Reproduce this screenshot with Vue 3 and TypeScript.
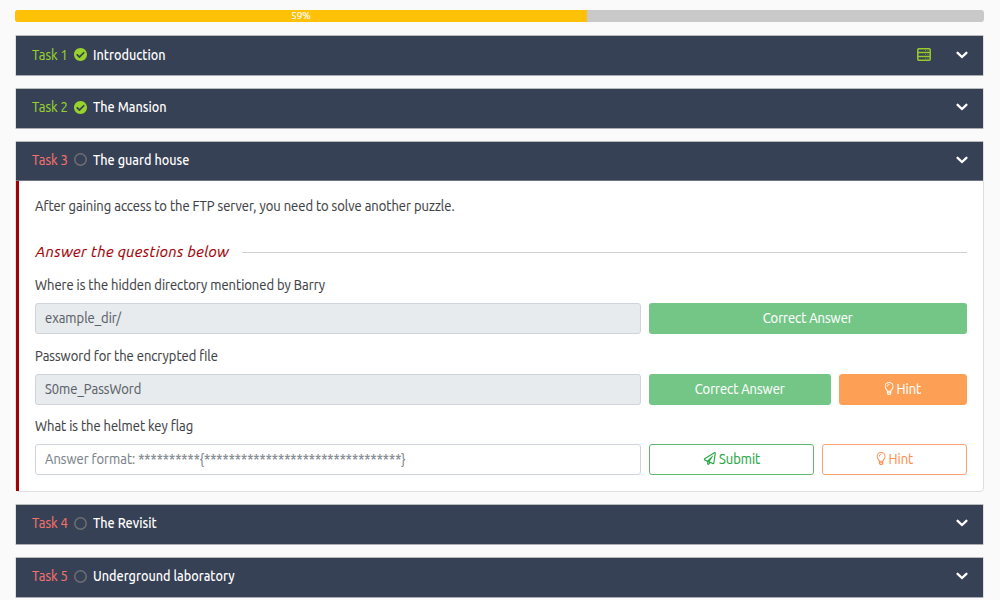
<script setup lang="ts">
interface Question {
  id: string
  prompt: string
  value: string
  placeholder?: string
  solved: boolean
  hint: boolean
}
interface Task {
  id: number
  title: string
  done: boolean
  server?: boolean
  open?: boolean
}

const progress = 59
const tasks: Task[] = [
  { id: 1, title: 'Introduction', done: true, server: true },
  { id: 2, title: 'The Mansion', done: true },
  { id: 3, title: 'The guard house', done: false, open: true },
  { id: 4, title: 'The Revisit', done: false },
  { id: 5, title: 'Underground laboratory', done: false },
]
const questions: Question[] = [
  { id: 'dir', prompt: 'Where is the hidden directory mentioned by Barry', value: 'example_dir/', solved: true, hint: false },
  { id: 'pass', prompt: 'Password for the encrypted file', value: 'S0me_PassWord', solved: true, hint: true },
  {
    id: 'flag',
    prompt: 'What is the helmet key flag',
    value: '',
    placeholder: 'Answer format: ' + '*'.repeat(10) + '{' + '*'.repeat(32) + '}',
    solved: false,
    hint: true,
  },
]
</script>

<template>
  <main class="page">
    <div class="progress">
      <div class="bar" :style="{ width: progress + '%' }"><span>{{ progress }}%</span></div>
    </div>

    <section v-for="t in tasks" :key="t.id" class="card" :class="{ open: t.open }">
      <header class="head">
        <span class="num" :class="{ done: t.done }"><span class="t">Task {{ t.id }}</span></span>
        <svg v-if="t.done" class="state" viewBox="8 8 496 496">
          <path fill="#98d32b" d="M504 256c0 136.967-111.033 248-248 248S8 392.967 8 256 119.033 8 256 8s248 111.033 248 248zM227.314 387.314l184-184c6.248-6.248 6.248-16.379 0-22.627l-22.627-22.627c-6.248-6.249-16.379-6.249-22.628 0L216 308.118l-70.059-70.059c-6.248-6.248-16.379-6.248-22.628 0l-22.627 22.627c-6.248 6.248-6.248 16.379 0 22.627l104 104c6.249 6.249 16.379 6.249 22.628.001z" />
        </svg>
        <svg v-else class="state" viewBox="0 0 13 13">
          <circle cx="6.5" cy="6.5" r="5.7" fill="none" stroke="#6d6f73" stroke-width="1.5" />
        </svg>
        <span class="title t">{{ t.title }}</span>
        <svg v-if="t.server" class="server" viewBox="0 0 14 13" fill="none" stroke="#98cb2b">
          <rect x=".8" y=".8" width="12.4" height="11.4" rx=".9" stroke-width="1.5" />
          <path d="M1 4.6h12M1 8.4h12" stroke-width="1.5" />
          <path d="M8 2.6h1M10.4 2.6h1M8 6.5h1M10.4 6.5h1M8 10.3h1M10.4 10.3h1" stroke-width=".9" opacity=".65" />
        </svg>
        <svg class="chevron" viewBox="0 0 12 8">
          <path d="M1.6 1.8 6 6l4.4-4.2" fill="none" stroke="#fff" stroke-width="2.3" stroke-linecap="round" />
        </svg>
      </header>

      <div v-if="t.open" class="body">
        <p class="intro"><span class="t">After gaining access to the FTP server, you need to solve another puzzle.</span></p>
        <h2 class="divider"><span>Answer the questions below</span></h2>
        <div v-for="q in questions" :key="q.id" class="question" :class="'q-' + q.id">
          <div class="prompt"><span class="t">{{ q.prompt }}</span></div>
          <div class="row">
            <div class="field" :class="{ disabled: q.solved }"><span class="t">{{ q.value || q.placeholder }}</span></div>
            <button v-if="q.solved" class="btn correct"><span class="label">Correct Answer</span></button>
            <button v-else class="btn submit">
              <span class="label">
                <svg class="plane" viewBox="0 0 512 512"><path fill="currentColor" d="M440 6.5L24 246.4c-34.4 19.9-31.1 70.8 5.7 85.9L144 379.6V464c0 46.4 59.2 65.5 86.6 28.6l43.8-59.1 111.9 46.2c5.9 2.4 12.1 3.6 18.3 3.6 8.2 0 16.3-2.1 23.6-6.2 12.8-7.2 21.6-20 23.9-34.5l59.4-387.2c6.1-40.1-36.9-68.8-71.5-48.9zM192 464v-64.6l36.6 15.1L192 464zm212.6-28.7l-153.8-63.5L391 169.5c10.7-15.5-9.5-33.5-23.7-21.2L155.8 332.6 48 288 464 48l-59.4 387.3z" /></svg>
                <span>Submit</span>
              </span>
            </button>
            <button v-if="q.hint" class="btn hint">
              <span class="label">
                <svg class="bulb" viewBox="0 0 9 13" preserveAspectRatio="none" fill="none" stroke="currentColor" stroke-linecap="round" stroke-linejoin="round">
                  <path d="M2.8 9.2C2.7 7.6.6 6.8.6 4.4a3.9 3.9 0 0 1 7.8 0C8.4 6.8 6.3 7.6 6.2 9.2zM2.8 9.2v2l.8 1.2h1.8l.8-1.2v-2M2.9 10.8h3.2" stroke-width="1" />
                  <path d="M2.5 4.3A2 2 0 0 1 4.5 2.4" stroke-width=".8" />
                </svg>
                <span>Hint</span>
              </span>
            </button>
          </div>
        </div>
      </div>
    </section>
  </main>
</template>

<style>
html,
body {
  background: #fafafa;
  overflow: hidden;
}
</style>

<style scoped>
* {
  box-sizing: border-box;
}
.page {
  height: 600px;
  overflow: hidden;
  padding: 10px 16px 0 15px;
  font-family: Ubuntu, 'Noto Sans', sans-serif;
  font-size: 14px;
  line-height: 20px;
  color: #3e4246;
  -webkit-text-stroke: 0.15px;
}
/* slightly condensed text */
.t {
  display: inline-block;
  white-space: nowrap;
  transform: scaleX(0.927);
  transform-origin: 0 50%;
}
.progress {
  height: 12px;
  margin-bottom: 13px;
  border-radius: 3px;
  background: #c9c9c9;
  overflow: hidden;
}
.bar {
  height: 12px;
  background: #ffc107;
  color: #fff;
  font-size: 10px;
  line-height: 12px;
  text-align: center;
}
.card {
  border: 1px solid #dfdfdf;
  margin-bottom: 11.8px;
  background: #fff;
}
.card.open {
  border-radius: 0 0 4px 4px;
}
.head {
  height: 39px;
  padding: 0 15px 2px 16px;
  display: flex;
  align-items: center;
  background: #374156;
  box-shadow: 0 -1px #b9bbbd, 0 1px #a9acb0;
  color: #fff;
}
.open .head {
  box-shadow: 0 -1px #b9bbbd;
  border-bottom: 1px solid #6d7380;
}
.num {
  width: 42px;
  color: #f4716c;
  white-space: nowrap;
}
.num.done {
  color: #98d32b;
}
.state {
  width: 13px;
  height: 13px;
  margin-right: 6px;
}
.title {
  margin-right: auto;
  font-weight: 500;
  transform: scaleX(0.905);
  -webkit-text-stroke: 0;
}
.server {
  width: 14px;
  height: 13px;
  margin-right: 25px;
}
.chevron {
  width: 12px;
  height: 8px;
}
.body {
  height: 310.6px;
  padding: 15px 16px 0 16px;
  border-left: 3px solid #a30006;
}
.intro {
  margin: 0;
}
.divider {
  height: 24px;
  margin: 24.6px 0 11px;
  padding-left: 0.6px;
  display: flex;
  align-items: center;
  font-size: 15px;
  font-weight: 400;
  font-style: italic;
  letter-spacing: 0.38px;
  color: #a30006;
}
.divider::after {
  content: '';
  flex: 1;
  height: 1px;
  margin-left: 13px;
  background: #cfcfcf;
}
.question {
  height: 70.4px;
}
.prompt {
  height: 28px;
  line-height: 20px;
}
.row {
  display: flex;
  gap: 8px;
}
.field {
  width: 606px;
  height: 31px;
  padding: 0 9px;
  line-height: 28px;
  border: 1px solid #ced4da;
  border-radius: 3px;
  color: #7b838a;
}
.field.disabled {
  background: #e8ebee;
  color: #5b6269;
}
.btn {
  height: 31px;
  display: flex;
  flex: 1;
  align-items: center;
  justify-content: center;
  padding: 0 0 1px;
  border: 1px solid transparent;
  border-radius: 3px;
  background: #fff;
  font: inherit;
}
.label {
  display: flex;
  align-items: center;
  gap: 3px;
  transform: scaleX(0.925);
}
.correct {
  background: #73c686;
  color: #fff;
}
.submit {
  flex: 0 0 165px;
  border-color: #5eb872;
  color: #28a745;
}
.hint {
  border-color: #fba274;
  color: #fd8f52;
}
.q-pass .hint {
  flex: 0 0 128px;
  border-color: #fd9f54;
  background: #fd9f54;
  color: #fff;
}
.plane {
  width: 14px;
  height: 13px;
}
.bulb {
  width: 10px;
  height: 13px;
}
</style>
